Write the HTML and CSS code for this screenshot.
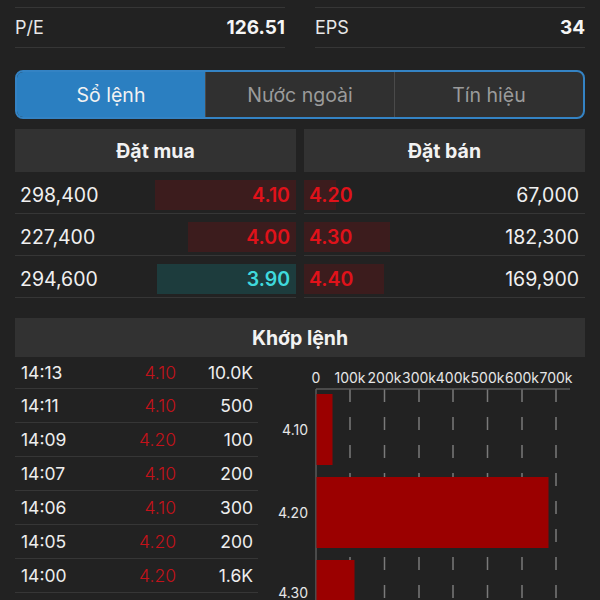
FILE: index.html
```html
<!DOCTYPE html>
<html lang="vi">
<head>
    <meta charset="UTF-8">
    <meta name="viewport" content="width=device-width, initial-scale=1.0">
    <title>Sổ lệnh</title>
    <link rel="stylesheet" href="styles.css">
</head>
<body>
    <div class="screen">
        <div class="stats">
            <div class="stat"><span>P/E</span><b>126.51</b></div>
            <div class="stat"><span>EPS</span><b>34</b></div>
        </div>

        <div class="tabs">
            <div class="tab active">Sổ lệnh</div>
            <div class="tab">Nước ngoài</div>
            <div class="tab">Tín hiệu</div>
        </div>

        <div class="book">
            <div class="book-col buy">
                <div class="section-head">Đặt mua</div>
                <div class="book-row">
                    <span class="qty">298,400</span>
                    <div class="bar red" style="width: 141px"><span class="price down">4.10</span></div>
                </div>
                <div class="book-row">
                    <span class="qty">227,400</span>
                    <div class="bar red" style="width: 108px"><span class="price down">4.00</span></div>
                </div>
                <div class="book-row">
                    <span class="qty">294,600</span>
                    <div class="bar teal" style="width: 139px"><span class="price floor">3.90</span></div>
                </div>
            </div>
            <div class="book-col sell">
                <div class="section-head">Đặt bán</div>
                <div class="book-row">
                    <div class="bar red" style="width: 32px"><span class="price down">4.20</span></div>
                    <span class="qty">67,000</span>
                </div>
                <div class="book-row">
                    <div class="bar red" style="width: 86px"><span class="price down">4.30</span></div>
                    <span class="qty">182,300</span>
                </div>
                <div class="book-row">
                    <div class="bar red" style="width: 80px"><span class="price down">4.40</span></div>
                    <span class="qty">169,900</span>
                </div>
            </div>
        </div>

        <div class="section-head match-head">Khớp lệnh</div>
        <div class="match">
            <div class="trades">
                <div class="trade"><span>14:13</span><span class="tp">4.10</span><span class="tv">10.0K</span></div>
                <div class="trade"><span>14:11</span><span class="tp">4.10</span><span class="tv">500</span></div>
                <div class="trade"><span>14:09</span><span class="tp">4.20</span><span class="tv">100</span></div>
                <div class="trade"><span>14:07</span><span class="tp">4.10</span><span class="tv">200</span></div>
                <div class="trade"><span>14:06</span><span class="tp">4.10</span><span class="tv">300</span></div>
                <div class="trade"><span>14:05</span><span class="tp">4.20</span><span class="tv">200</span></div>
                <div class="trade"><span>14:00</span><span class="tp">4.20</span><span class="tv">1.6K</span></div>
            </div>
            <svg class="chart" width="327" height="260" viewBox="0 0 327 260">
                <g class="axis-labels" text-anchor="middle">
                    <text x="58" y="26">0</text>
                    <text x="92" y="26">100k</text>
                    <text x="126.5" y="26">200k</text>
                    <text x="161" y="26">300k</text>
                    <text x="195" y="26">400k</text>
                    <text x="229.5" y="26">500k</text>
                    <text x="264" y="26">600k</text>
                    <text x="298" y="26">700k</text>
                </g>
                <g class="grid">
                    <line x1="92" y1="32" x2="92" y2="260"/>
                    <line x1="126.5" y1="32" x2="126.5" y2="260"/>
                    <line x1="161" y1="32" x2="161" y2="260"/>
                    <line x1="195" y1="32" x2="195" y2="260"/>
                    <line x1="229.5" y1="32" x2="229.5" y2="260"/>
                    <line x1="264" y1="32" x2="264" y2="260"/>
                    <line x1="298" y1="32" x2="298" y2="260"/>
                </g>
                <line class="axis" x1="58" y1="32" x2="312" y2="32"/>
                <line class="axis" x1="58" y1="32" x2="58" y2="260"/>
                <g class="bars">
                    <rect x="58.5" y="37" width="16" height="71"/>
                    <rect x="58.5" y="120" width="232" height="71"/>
                    <rect x="58.5" y="203" width="38" height="71"/>
                </g>
                <g class="y-labels" text-anchor="end">
                    <text x="50" y="78">4.10</text>
                    <text x="50" y="161">4.20</text>
                    <text x="50" y="241">4.30</text>
                </g>
            </svg>
        </div>
    </div>
</body>
</html>
```

FILE: styles.css
```css
html, body {
    margin: 0;
    padding: 0;
    background-color: #222222;
}
body {
    color: #f0f0f0;
    font-family: Inter, "Noto Sans", sans-serif;
}
.screen {
    height: 600px;
    overflow: hidden;
    padding: 7px 15px 0;
}
.stats {
    display: grid;
    grid-template-columns: 1fr 1fr;
    gap: 30px;
}
.stat {
    display: flex;
    justify-content: space-between;
    align-items: center;
    height: 39px;
    border-top: 1px solid #363636;
    border-bottom: 1px solid #363636;
    font-size: 18px;
}
.stat span {
    color: #e8e8e8;
}
.stat b {
    font-weight: 700;
    font-size: 19px;
    color: #f5f5f5;
}
.tabs {
    display: flex;
    margin-top: 22px;
    height: 45px;
    border: 2px solid #3483c4;
    border-radius: 8px;
    overflow: hidden;
    background-color: #303030;
}
.tab {
    flex: 1;
    display: flex;
    align-items: center;
    justify-content: center;
    font-size: 19.5px;
    color: #9b9b9b;
    border-left: 1px solid #4a4a4a;
}
.tab:first-child {
    border-left: none;
}
.tab.active {
    flex: 0 0 188px;
    background-color: #2b7fc1;
    color: #f2f2f2;
}
.book {
    display: grid;
    grid-template-columns: 1fr 1fr;
    gap: 8px;
    margin-top: 10px;
}
.section-head {
    height: 43px;
    display: flex;
    align-items: center;
    justify-content: center;
    background-color: #323232;
    font-weight: 700;
    font-size: 19.5px;
    color: #f2f2f2;
}
.book-row {
    display: flex;
    justify-content: space-between;
    align-items: center;
    height: 30px;
    padding: 8px 0 3px;
    border-bottom: 1px solid #363636;
    font-size: 19.5px;
}
.buy .qty {
    padding-left: 5px;
}
.sell .qty {
    padding-right: 6px;
}
.bar {
    height: 30px;
    display: flex;
    align-items: center;
    box-sizing: border-box;
}
.buy .bar {
    justify-content: flex-end;
    padding-right: 6px;
}
.sell .bar {
    padding-left: 5px;
    white-space: nowrap;
}
.bar.red {
    background-color: #3c1c1d;
}
.bar.teal {
    background-color: #1d3c3d;
}
.price {
    font-weight: 600;
}
.price.down {
    color: #e0121a;
}
.price.floor {
    color: #3fd9dc;
}
.match-head {
    margin-top: 20px;
    height: 39px;
}
.match {
    display: flex;
}
.trades {
    width: 243px;
    flex: none;
}
.trade {
    display: grid;
    grid-template-columns: 1fr 80px 77px;
    align-items: center;
    height: 33px;
    padding: 0 5px 0 6px;
    border-bottom: 1px solid #363636;
    font-size: 17.5px;
    color: #eeeeee;
}
.trade:first-child {
    height: 31px;
}
.trade .tp,
.trade .tv {
    text-align: right;
}
.trade .tp {
    color: #c4121a;
    font-weight: 300;
}
.chart {
    display: block;
    flex: none;
}
.chart text {
    font-family: Inter, "Noto Sans", sans-serif;
    font-size: 14px;
    fill: #e6e6e6;
}
.grid line {
    stroke: #7a7a7a;
    stroke-width: 1.5;
    stroke-dasharray: 13 15;
}
.axis {
    stroke: #5a5a5a;
    stroke-width: 1.5;
}
.bars rect {
    fill: #9b0000;
}
```
